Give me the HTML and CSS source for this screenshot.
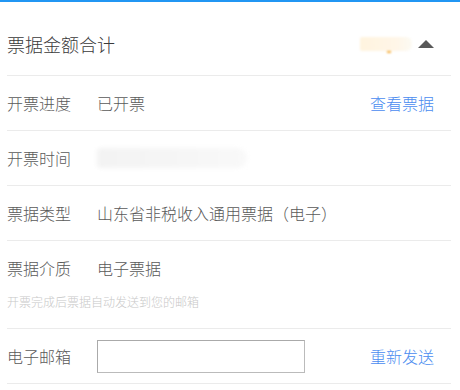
FILE: index.html
```html
<!DOCTYPE html>
<html lang="zh-CN">

<head>
    <meta charset="UTF-8">
    <meta name="viewport" content="width=device-width, initial-scale=1.0">
    <title>票据详情</title>
    <link rel="stylesheet" href="styles.css">
</head>

<body>
    <div class="top-bar"></div>
    <div class="panel">
        <div class="panel-header">
            <span class="panel-title">票据金额合计</span>
            <span class="amount-mask"><span class="amount-dot"></span></span>
            <svg class="toggle-icon" width="16" height="8" viewBox="0 0 16 8">
                <polygon points="8,0 16,8 0,8" fill="#595959" />
            </svg>
        </div>

        <div class="info-row">
            <span class="info-label">开票进度</span>
            <span class="info-value">已开票</span>
            <a class="info-link" href="#">查看票据</a>
        </div>

        <div class="info-row">
            <span class="info-label">开票时间</span>
            <span class="info-value"><span class="time-mask"></span></span>
        </div>

        <div class="info-row">
            <span class="info-label">票据类型</span>
            <span class="info-value">山东省非税收入通用票据（电子）</span>
        </div>

        <div class="info-block">
            <div class="info-row no-border">
                <span class="info-label">票据介质</span>
                <span class="info-value">电子票据</span>
            </div>
            <p class="info-hint">开票完成后票据自动发送到您的邮箱</p>
        </div>

        <div class="info-row">
            <label class="info-label" for="email">电子邮箱</label>
            <span class="info-value"><input id="email" class="email-input" type="text"></span>
            <a class="info-link" href="#">重新发送</a>
        </div>
    </div>
</body>

</html>
```

FILE: styles.css
```css
/* Page */
body {
    margin: 0;
    background-color: #fff;
    font-family: 'Noto Sans CJK SC', 'Noto Sans', sans-serif;
    font-weight: 300;
    color: #5a5a5a;
}

.top-bar {
    height: 2px;
    background-color: #2196f3;
}

.panel {
    padding: 0 9px 0 7px;
}

/* Header with total amount */
.panel-header {
    display: flex;
    align-items: center;
    height: 63px;
    padding: 10px 17px 0 0;
    border-bottom: 1px solid #ebebeb;
}

.panel-title {
    flex: 1;
    font-size: 18px;
    color: #3a3a3a;
}

.amount-mask {
    position: relative;
    width: 52px;
    height: 14px;
    margin-right: 6px;
    background: linear-gradient(90deg, #fff4df, #fff6e8 70%, #fcfaf3);
    border-radius: 2px 6px 6px 2px;
    filter: blur(1.2px);
}

.amount-dot {
    position: absolute;
    left: 27px;
    bottom: -2px;
    width: 4px;
    height: 2px;
    background-color: #f5b042;
}

.toggle-icon {
    display: block;
}

/* Rows */
.info-row {
    display: flex;
    align-items: center;
    height: 54px;
    padding-right: 17px;
    border-bottom: 1px solid #ebebeb;
    font-size: 16px;
}

.info-row.no-border {
    border-bottom: none;
}

.info-block {
    border-bottom: 1px solid #ebebeb;
    padding-bottom: 19px;
}

.info-label {
    width: 90px;
    flex-shrink: 0;
}

.info-value {
    flex: 1;
}

.info-link {
    color: #4a8cf0;
    text-decoration: none;
}

.info-hint {
    margin: 0;
    font-size: 12px;
    line-height: 14px;
    color: #c8c8c8;
}

.time-mask {
    display: block;
    width: 150px;
    height: 20px;
    background: linear-gradient(90deg, #f3f3f3, #f6f6f6 60%, #f9f9f9);
    border-radius: 4px 10px 10px 4px;
    filter: blur(2px);
}

.email-input {
    display: block;
    box-sizing: border-box;
    width: 208px;
    height: 33px;
    margin: 0;
    padding: 0 6px;
    border: 1px solid #aaa;
    border-right-color: #bbb;
    border-bottom-color: #bbb;
    font-size: 14px;
    outline: none;
}
```
